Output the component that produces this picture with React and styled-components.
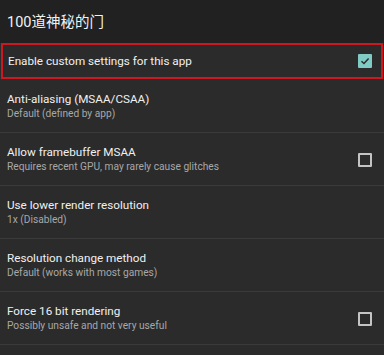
import React from "react";
import styled, { createGlobalStyle } from "styled-components";

const Global = createGlobalStyle`
  html, body { margin: 0; padding: 0; background: #2b2b2b; }
  body { font-family: Roboto, "Noto Sans", "Noto Sans CJK SC", sans-serif; }
`;

const Page = styled.div`
  width: 384px;
  height: 355px;
  background: #2b2b2b;
  overflow: hidden;
  display: flex;
  flex-direction: column;
`;

const Header = styled.div`
  height: 43px;
  flex: none;
  background: #212121;
  display: flex;
  align-items: center;
  padding: 0 7px 2px;
  box-sizing: border-box;
  color: #f2f2f2;
  font-size: 14.5px;
  font-family: Roboto, "Noto Sans CJK SC", sans-serif;
`;

const EnableRow = styled.div`
  height: 36px;
  flex: none;
  box-sizing: border-box;
  margin: 0 1px 1px;
  border: 2px solid #cc1820;
  display: flex;
  align-items: center;
  justify-content: space-between;
  padding: 0 9px 0 5px;
  color: #f0f0f0;
  font-size: 11.7px;
`;

const Row = styled.div`
  height: 53px;
  flex: none;
  box-sizing: border-box;
  border-bottom: 1px solid #3a3a3a;
  display: flex;
  align-items: flex-start;
  justify-content: space-between;
  padding: 12px 12px 0 7px;
`;

const Texts = styled.div`
  display: flex;
  flex-direction: column;
`;

const Title = styled.div`
  color: #f0f0f0;
  font-size: 11.7px;
  line-height: 15px;
`;

const Sub = styled.div`
  color: #a8a8a8;
  font-size: 10.2px;
  line-height: 13px;
`;

const Box = styled.div`
  width: 14px;
  height: 14px;
  box-sizing: border-box;
  border-radius: 1px;
  margin-top: ${p => (p.$inline ? "0" : "8px")};
  border: 2px solid ${p => (p.$checked ? "#80cbc4" : "#c4c4c4")};
  background: ${p => (p.$checked ? "#80cbc4" : "transparent")};
  display: flex;
  align-items: center;
  justify-content: center;
`;

const CheckBox = ({ checked, inline }) => (
  <Box $checked={checked} $inline={inline}>
    {checked && (
      <svg width="10" height="10" viewBox="0 0 10 10">
        <path d="M1.5 5.2 L4 7.5 L8.6 2.6" fill="none" stroke="#2b2b2b" strokeWidth="1.5" />
      </svg>
    )}
  </Box>
);

const items = [
  { t: "Anti-aliasing (MSAA/CSAA)", s: "Default (defined by app)" },
  { t: "Allow framebuffer MSAA", s: "Requires recent GPU, may rarely cause glitches", c: false },
  { t: "Use lower render resolution", s: "1x (Disabled)" },
  { t: "Resolution change method", s: "Default (works with most games)" },
  { t: "Force 16 bit rendering", s: "Possibly unsafe and not very useful", c: false },
];

export default function App() {
  return (
    <Page>
      <Global />
      <Header>100道神秘的门</Header>
      <EnableRow>
        <span>Enable custom settings for this app</span>
        <CheckBox checked inline />
      </EnableRow>
      {items.map((it, i) => (
        <Row key={i}>
          <Texts>
            <Title>{it.t}</Title>
            <Sub>{it.s}</Sub>
          </Texts>
          {it.c !== undefined && <CheckBox checked={it.c} />}
        </Row>
      ))}
    </Page>
  );
}
